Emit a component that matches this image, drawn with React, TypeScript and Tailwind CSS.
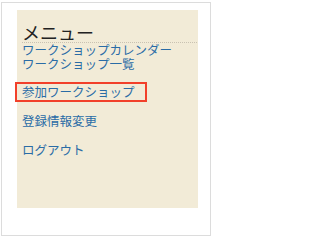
export default function App() {
  const font = { fontFamily: '"Noto Sans CJK JP", "Noto Sans", sans-serif' };

  return (
    <div className="w-[214px] h-[240px] bg-white" style={font}>
      <div className="ml-[1px] mt-[2px] w-[210px] h-[234px] border border-[#dcdcdc] bg-white pl-[15px] pt-[7px]">
        <div className="w-[181px] h-[198px] bg-[#f2ebd7] pl-[5px] pr-[1px] pt-[12px]">
          {/* Menu header */}
          <h2 className="text-[18px] leading-[20px] text-[#222222] border-b border-dotted border-[#c9c2b2]">
            メニュー
          </h2>

          {/* Menu links */}
          <ul className="text-[12.5px] text-[#2a6ca6]">
            <li className="leading-[14px]">
              <a href="#">ワークショップカレンダー</a>
              <br />
              <a href="#">ワークショップ一覧</a>
            </li>
            <li className="mt-[11px] -ml-[7px] w-[132px] border-2 border-[#f2402a] pl-[5px] leading-[16px]">
              <a href="#">参加ワークショップ</a>
            </li>
            <li className="mt-[12px] leading-[14px]">
              <a href="#">登録情報変更</a>
            </li>
            <li className="mt-[15px] leading-[14px]">
              <a href="#">ログアウト</a>
            </li>
          </ul>
        </div>
      </div>
    </div>
  );
}
